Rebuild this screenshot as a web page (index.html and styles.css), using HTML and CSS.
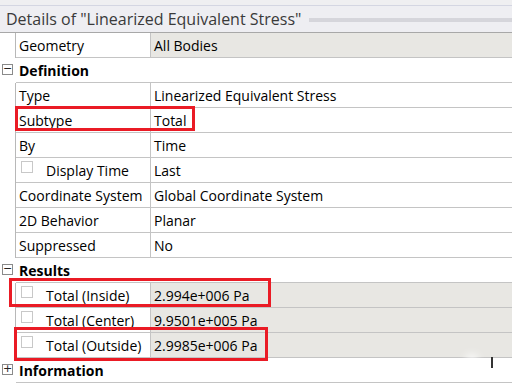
FILE: index.html
```html
<!DOCTYPE html>
<html lang="en">
<head>
    <meta charset="UTF-8">
    <title>Details of "Linearized Equivalent Stress"</title>
    <link rel="stylesheet" href="styles.css">
</head>
<body>
    <div class="panel">
        <div class="title-bar">
            <span class="title">Details of "Linearized Equivalent Stress"</span>
            <span class="grip"></span>
        </div>
        <div class="grid">
            <div class="row">
                <div class="gutter"></div>
                <div class="name">Geometry</div>
                <div class="value gray">All Bodies</div>
            </div>
            <div class="row group">
                <div class="gutter"><span class="toggle">&minus;</span></div>
                <div class="group-name">Definition</div>
            </div>
            <div class="row">
                <div class="gutter"></div>
                <div class="name">Type</div>
                <div class="value">Linearized Equivalent Stress</div>
            </div>
            <div class="row">
                <div class="gutter"></div>
                <div class="name">Subtype</div>
                <div class="value">Total</div>
            </div>
            <div class="row">
                <div class="gutter"></div>
                <div class="name">By</div>
                <div class="value">Time</div>
            </div>
            <div class="row">
                <div class="gutter"></div>
                <div class="name"><span class="check"></span>Display Time</div>
                <div class="value">Last</div>
            </div>
            <div class="row">
                <div class="gutter"></div>
                <div class="name">Coordinate System</div>
                <div class="value">Global Coordinate System</div>
            </div>
            <div class="row">
                <div class="gutter"></div>
                <div class="name">2D Behavior</div>
                <div class="value">Planar</div>
            </div>
            <div class="row">
                <div class="gutter"></div>
                <div class="name">Suppressed</div>
                <div class="value">No</div>
            </div>
            <div class="row group">
                <div class="gutter"><span class="toggle">&minus;</span></div>
                <div class="group-name">Results</div>
            </div>
            <div class="row">
                <div class="gutter"></div>
                <div class="name"><span class="check"></span>Total (Inside)</div>
                <div class="value gray">2.994e+006 Pa</div>
            </div>
            <div class="row">
                <div class="gutter"></div>
                <div class="name"><span class="check"></span>Total (Center)</div>
                <div class="value gray">9.9501e+005 Pa</div>
            </div>
            <div class="row">
                <div class="gutter"></div>
                <div class="name"><span class="check"></span>Total (Outside)</div>
                <div class="value gray">2.9985e+006 Pa</div>
            </div>
            <div class="row group">
                <div class="gutter"><span class="toggle">+</span></div>
                <div class="group-name">Information</div>
            </div>
        </div>

        <div class="mark mark-subtype"></div>
        <div class="mark mark-inside"></div>
        <div class="mark mark-outside"></div>
        <div class="smudge"></div>
    </div>
</body>
</html>
```

FILE: styles.css
```css
body {
    margin: 0;
    background: #fff;
    font-family: "Open Sans", "Noto Sans", Arial, sans-serif;
    font-size: 14px;
    color: #000;
}
.panel {
    position: relative;
    width: 512px;
    height: 384px;
    overflow: hidden;
}
.title-bar {
    display: flex;
    align-items: center;
    gap: 8px;
    height: 26px;
    margin-top: 5px;
    padding-left: 6px;
    background: #eeeef2;
    border-top: 1px solid #d4d6e2;
    border-bottom: 1px solid #a8a8a8;
    box-shadow: 0 -5px 0 #efeff1;
}
.title {
    font-size: 16px;
    color: #3a3a3a;
    white-space: nowrap;
}
.grip {
    flex: 1;
    height: 4px;
    margin-top: 2px;
    background-image: radial-gradient(circle, #b8b8c0 0.6px, transparent 0.8px);
    background-size: 2px 2px;
}
.row {
    display: grid;
    grid-template-columns: 16px 135px 1fr;
    height: 25px;
}
.gutter {
    position: relative;
    border-right: 1px solid #b8b8b8;
}
.row.group .gutter {
    border-right: none;
}
.name,
.value,
.group-name {
    display: flex;
    align-items: center;
    padding-left: 3px;
    white-space: nowrap;
    border-bottom: 1px solid #c4c4c4;
}
.name {
    border-right: 1px solid #c4c4c4;
}
.value.gray {
    background: #e8e7e3;
}
.group-name {
    grid-column: 2 / 4;
    font-weight: bold;
}
.toggle {
    position: absolute;
    left: 2px;
    top: 6px;
    width: 9px;
    height: 9px;
    border: 1px solid #8a8a8a;
    background: #fff;
    font-size: 11px;
    line-height: 8px;
    text-align: center;
    font-family: "DejaVu Sans", sans-serif;
    color: #222;
}
.check {
    display: inline-block;
    width: 10px;
    height: 10px;
    margin: 0 13px 7px 2px;
    border: 1px solid #c8c8c8;
    background: #fff;
    flex: none;
}
.mark {
    position: absolute;
    border: 3px solid #ea1b25;
}
.mark-subtype {
    left: 15px;
    top: 106px;
    width: 174px;
    height: 19px;
}
.mark-inside {
    left: 9px;
    top: 278px;
    width: 256px;
    height: 23px;
}
.mark-outside {
    left: 14px;
    top: 327px;
    width: 248px;
    height: 28px;
}
.smudge {
    position: absolute;
    left: 491px;
    top: 357px;
    width: 2px;
    height: 11px;
    background: #333;
    box-shadow: -20px 2px 10px 4px #fff;
}
```
